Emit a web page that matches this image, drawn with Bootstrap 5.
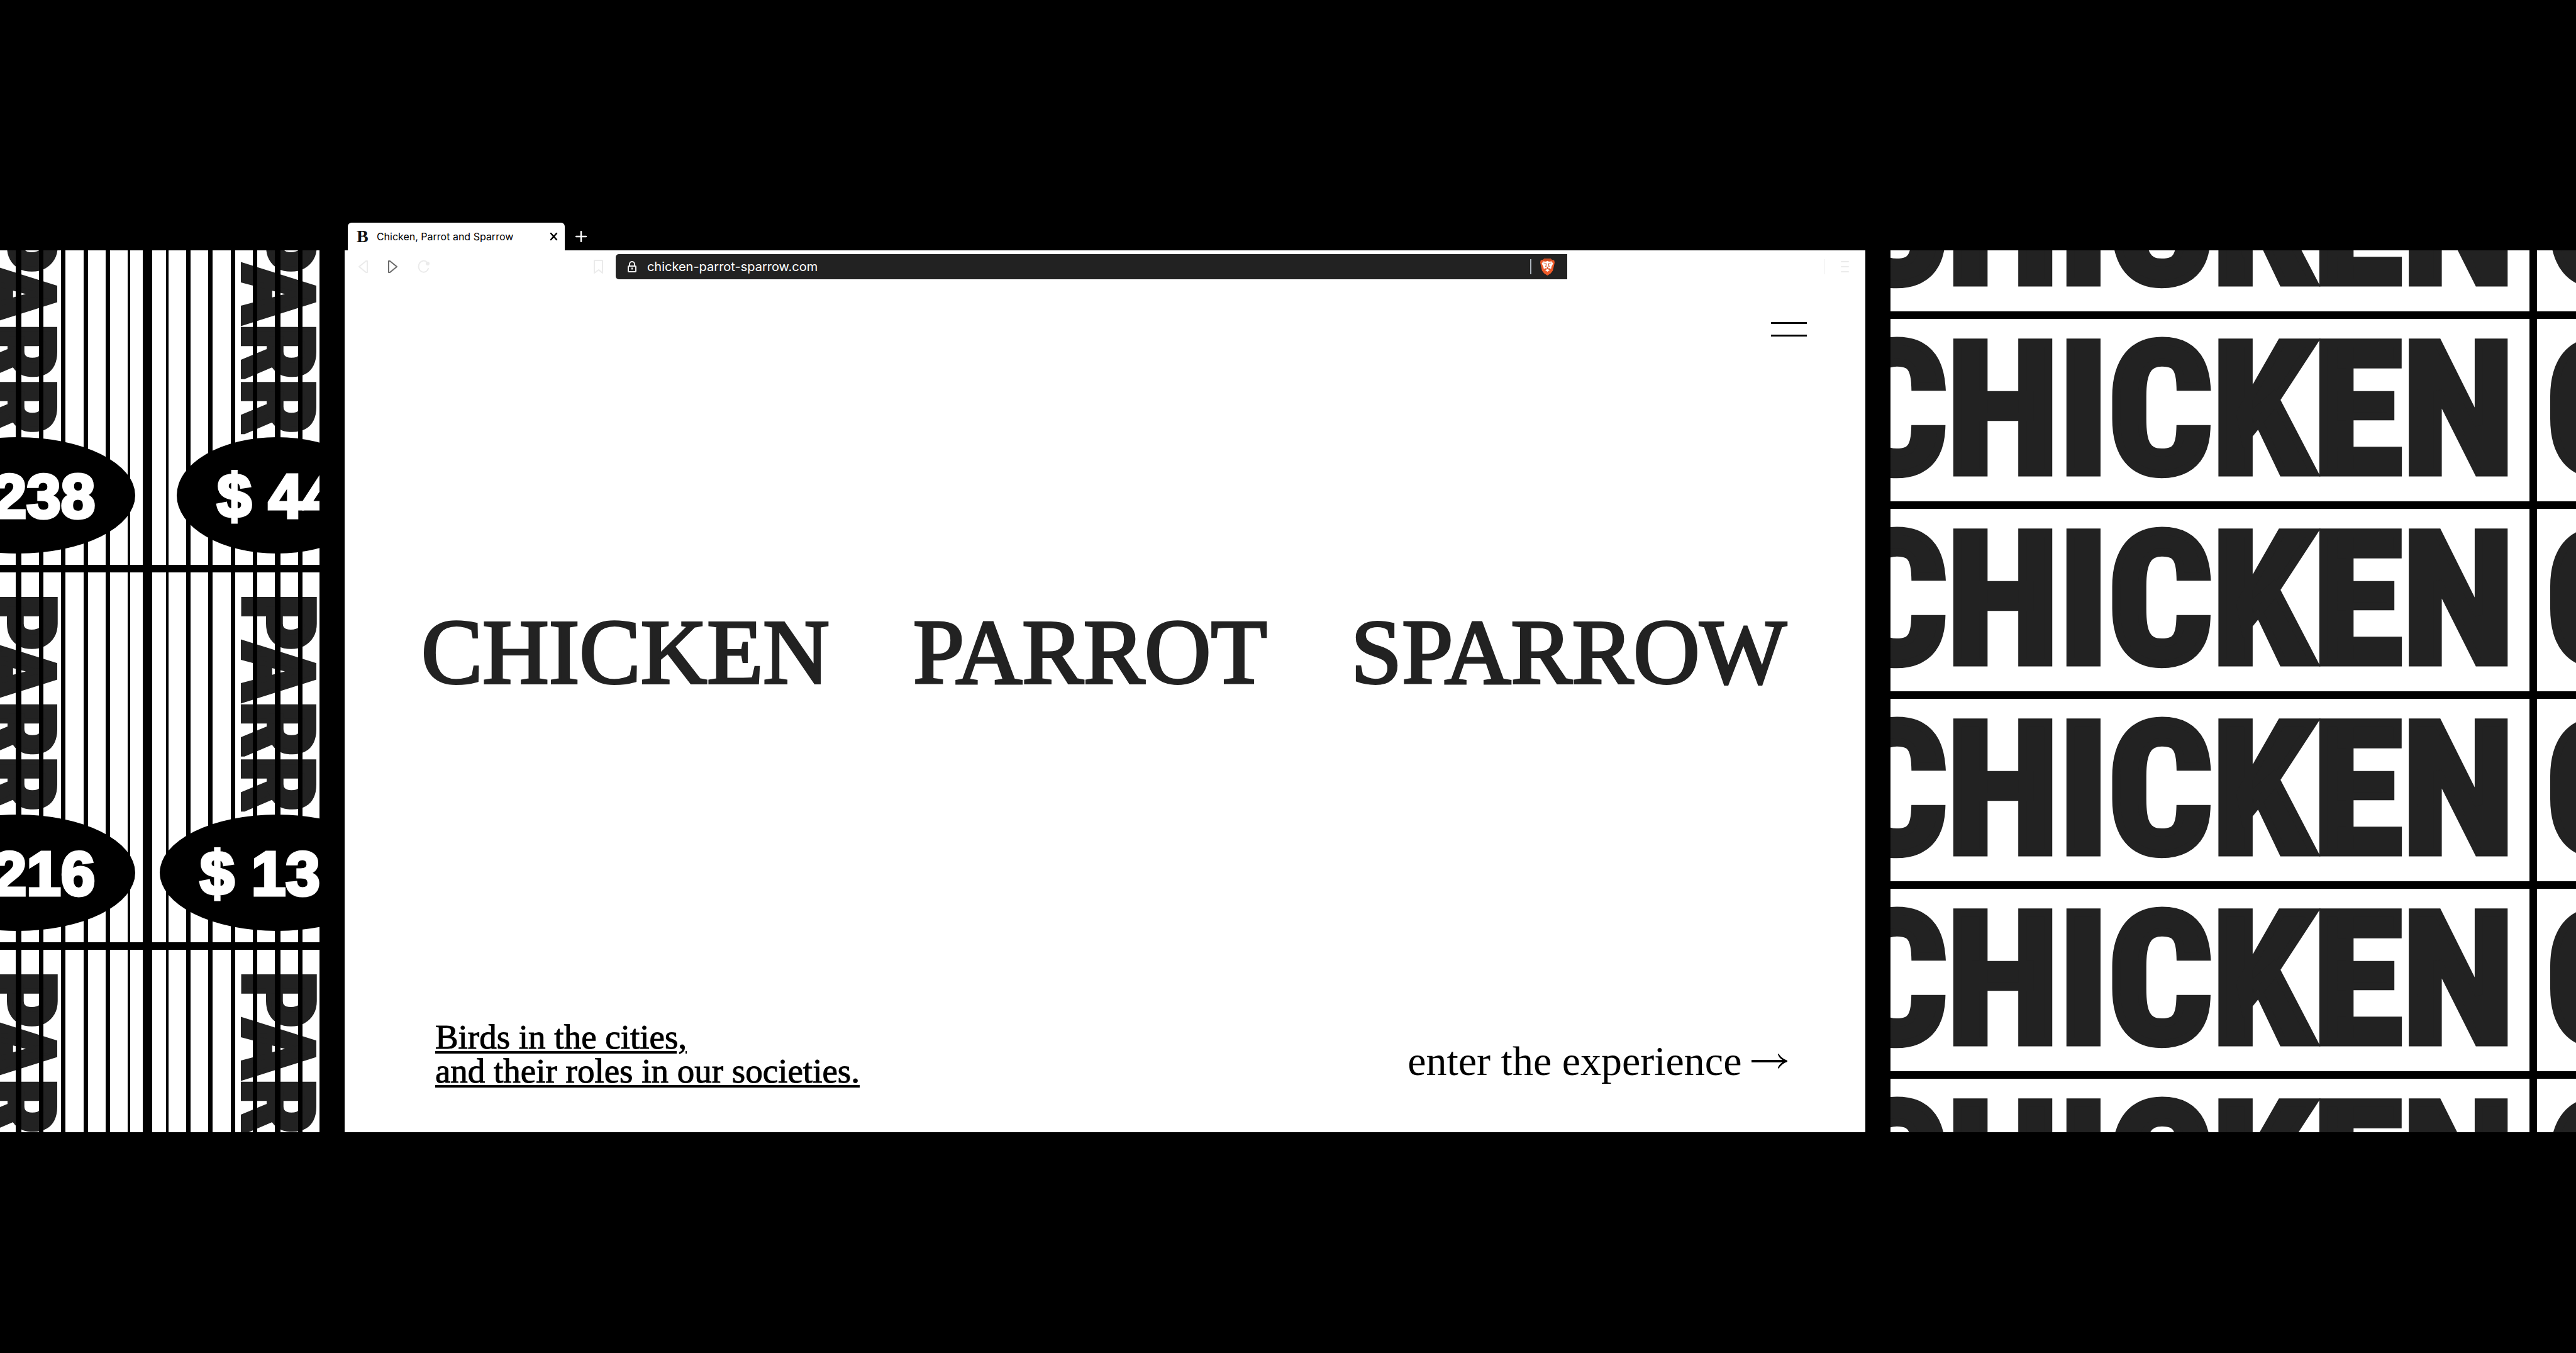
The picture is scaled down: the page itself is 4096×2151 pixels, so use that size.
<!DOCTYPE html>
<html lang="en">
<head>
<meta charset="utf-8">
<meta name="viewport" content="width=device-width, initial-scale=1">
<title>Chicken, Parrot and Sparrow</title>
<link href="https://cdn.jsdelivr.net/npm/bootstrap@5.3.0/dist/css/bootstrap.min.css" rel="stylesheet">
<style>
  :root { --ink: #222; --poster: "Roboto Condensed", "Liberation Sans Narrow", "Liberation Sans", sans-serif; }
  body { background: #000; color: #000; min-height: 100vh; overflow: hidden; }
  .stage { padding-top: 16.46vh; gap: 40px; }
  .side-panel { margin-top: 44px; height: 65.2vh; }
  .parrots { flex: 0 0 12.4vw; }
  .chickens { flex: 0 0 26.6vw; }

  /* caged parrots */
  .cages { margin: -88px 0 0 -170px; gap: 12px; }
  .cage-line { gap: 15px; }
  .cage { flex: 0 0 397px; height: 588px; background: #fff; padding-top: 34px; }
  .parrot-word { writing-mode: vertical-rl; font: 700 158px/184px var(--poster); color: var(--ink); -webkit-text-stroke: 8px var(--ink); white-space: nowrap; }
  .bars { padding: 0 20px 0 22px; }
  .bars i { background: #000; width: 7px; }
  .bars i:first-child, .bars i:last-child { width: 4px; }
  .bars i:nth-child(6) { width: 9px; }
  .price-row { padding-bottom: 18px; }
  .price { background: #000; color: #fff; border-radius: 50%; padding: 0 64px; height: 185px; font: 700 98px/189px "Liberation Sans", Arial, sans-serif; -webkit-text-stroke: 5px #fff; white-space: nowrap; }
  .price-wide { width: 373px; }

  /* stacked chickens */
  .shelves { margin: -193px 0 0 -90px; gap: 12px; }
  .shelf { gap: 12px; }
  .crate { flex: 0 0 1106px; height: 290px; background: #fff; padding-left: 14px; font: 700 290px/290px var(--poster); color: var(--ink); -webkit-text-stroke: 13px var(--ink); white-space: nowrap; overflow: hidden; }

  /* browser window */
  .browser { min-width: 0; height: calc(65.2vh + 44px); font-family: Inter, Roboto, sans-serif; }
  .tab-strip { height: 44px; padding-left: 5px; }
  .page-tab { width: 345px; height: 44px; background: #fff; border-radius: 6px 6px 0 0; padding: 0 11px 0 14px; font-size: 16px; }
  .favicon { font: 700 28px/44px "Liberation Serif", serif; width: 32px; color: #111; }
  .bare { background: none; border: 0; padding: 0; display: flex; align-items: center; justify-content: center; }
  .new-tab { margin-left: 17px; }
  .toolbar { padding: 6px 26px 0 22px; }
  .nav-tools { flex: 0 0 409px; padding-right: 20px; }
  .tool { margin-right: 32px; }
  .address { flex: 0 0 1513px; height: 40px; background: var(--ink); border-radius: 5px 0 0 5px; padding: 0 20px 0 19px; }
  .address input { background: none; border: 0; outline: 0; color: #fff; font-family: Inter, Roboto, sans-serif; font-size: 20px; padding: 0; margin-left: 17px; height: 40px; }
  .rule { width: 2px; height: 24px; background: #adb5bd; margin-right: 14px; }
  .rule-faint { background: #f6f6f6; margin-right: 25px; }
  .page { background: #fff; font-family: "Liberation Serif", serif; }
  .menu-btn { margin: 68px 93px 0 auto; }
  .headline { padding: 0 126px 84px 122px; color: var(--ink); font-size: 146px; line-height: 160px; -webkit-text-stroke: 4px var(--ink); margin: 0; }
  .headline a { color: inherit; text-decoration: none; }
  .page-foot { padding: 0 124px 70px 144px; }
  .about { font-size: 55px; line-height: 54px; color: #000; -webkit-text-stroke: 1px #000; text-decoration-thickness: 4px; text-underline-offset: 4px; }
  .enter { font-size: 66px; line-height: 72px; color: #000; gap: 16px; padding-bottom: 7px; }
</style>
</head>
<body>
<main class="stage d-flex align-items-start">

  <section class="side-panel parrots overflow-hidden" aria-label="Parrots">
    <div class="cages d-flex flex-column">
      <div class="cage-line d-flex">
        <div class="cage position-relative d-flex justify-content-center"><span class="parrot-word">PARR</span><div class="bars position-absolute top-0 start-0 w-100 h-100 d-flex justify-content-between"><i></i><i></i><i></i><i></i><i></i><i></i><i></i><i></i><i></i><i></i><i></i></div><div class="price-row position-absolute top-0 start-0 w-100 h-100 d-flex align-items-end justify-content-center"><span class="price price-wide">$ 238</span></div></div>
        <div class="cage position-relative d-flex justify-content-center"><span class="parrot-word">PARR</span><div class="bars position-absolute top-0 start-0 w-100 h-100 d-flex justify-content-between"><i></i><i></i><i></i><i></i><i></i><i></i><i></i><i></i><i></i><i></i><i></i></div><div class="price-row position-absolute top-0 start-0 w-100 h-100 d-flex align-items-end justify-content-center"><span class="price">$ 44</span></div></div>
      </div>
      <div class="cage-line d-flex">
        <div class="cage position-relative d-flex justify-content-center"><span class="parrot-word">PARR</span><div class="bars position-absolute top-0 start-0 w-100 h-100 d-flex justify-content-between"><i></i><i></i><i></i><i></i><i></i><i></i><i></i><i></i><i></i><i></i><i></i></div><div class="price-row position-absolute top-0 start-0 w-100 h-100 d-flex align-items-end justify-content-center"><span class="price price-wide">$ 216</span></div></div>
        <div class="cage position-relative d-flex justify-content-center"><span class="parrot-word">PARR</span><div class="bars position-absolute top-0 start-0 w-100 h-100 d-flex justify-content-between"><i></i><i></i><i></i><i></i><i></i><i></i><i></i><i></i><i></i><i></i><i></i></div><div class="price-row position-absolute top-0 start-0 w-100 h-100 d-flex align-items-end justify-content-center"><span class="price price-wide">$ 13</span></div></div>
      </div>
      <div class="cage-line d-flex">
        <div class="cage position-relative d-flex justify-content-center"><span class="parrot-word">PAR</span><div class="bars position-absolute top-0 start-0 w-100 h-100 d-flex justify-content-between"><i></i><i></i><i></i><i></i><i></i><i></i><i></i><i></i><i></i><i></i><i></i></div></div>
        <div class="cage position-relative d-flex justify-content-center"><span class="parrot-word">PAR</span><div class="bars position-absolute top-0 start-0 w-100 h-100 d-flex justify-content-between"><i></i><i></i><i></i><i></i><i></i><i></i><i></i><i></i><i></i><i></i><i></i></div></div>
      </div>
    </div>
  </section>

  <section class="browser flex-grow-1 d-flex flex-column">
    <div class="tab-strip d-flex align-items-center">
      <div class="page-tab d-flex align-items-center">
        <span class="favicon">B</span>
        <span class="me-auto text-nowrap">Chicken, Parrot and Sparrow</span>
        <button class="bare" aria-label="Close tab"><svg width="13" height="14" viewBox="0 0 13 14" stroke="#000" stroke-width="2.500" stroke-linecap="round"><path d="M2 2l9 10M11 2L2 12"/></svg></button>
      </div>
      <button class="bare new-tab" aria-label="New tab"><svg width="18" height="18" viewBox="0 0 18 18" stroke="#fff" stroke-width="2.500" stroke-linecap="round"><path d="M9 1v16M1 9h16"/></svg></button>
    </div>
    <div class="page flex-grow-1 d-flex flex-column">
      <div class="toolbar d-flex align-items-center">
        <div class="nav-tools d-flex align-items-center">
          <button class="bare tool" aria-label="Back"><svg width="15" height="22" viewBox="0 0 15 22" fill="none" stroke="#ebebeb" stroke-width="2" stroke-linejoin="round"><path d="M14 2v18h-2L1 11 12 2z"/></svg></button>
          <button class="bare tool" aria-label="Forward"><svg width="15" height="22" viewBox="0 0 15 22" fill="none" stroke="#6b6b6b" stroke-width="2" stroke-linejoin="round"><path d="M1 2v18h2l11-9L3 2z"/></svg></button>
          <button class="bare" aria-label="Reload"><svg width="20" height="22" viewBox="0 0 20 22" fill="none" stroke="#ebebeb" stroke-width="2" stroke-linecap="round"><path d="M15 4A8 9 0 1 0 17 14"/><circle cx="16" cy="6" r="2" fill="#ebebeb"/></svg></button>
          <button class="bare ms-auto" aria-label="Bookmark"><svg width="15" height="22" viewBox="0 0 15 22" fill="none" stroke="#ebebeb" stroke-width="2" stroke-linejoin="round"><path d="M1 1h13v20l-6-5-7 5z"/></svg></button>
        </div>
        <div class="address d-flex align-items-center">
          <svg width="14" height="18" viewBox="0 0 14 18" fill="none" stroke="#eee" stroke-width="2"><path d="M3 8V5a4 4 0 0 1 8 0v3"/><rect x="1" y="8" width="12" height="9" rx="1"/><path d="M6 12h2" stroke-width="3"/></svg>
          <input class="flex-grow-1" type="text" aria-label="Address" value="chicken-parrot-sparrow.com">
          <span class="rule"></span>
          <svg width="23" height="27" viewBox="0 0 56 95" preserveAspectRatio="none"><path d="M16 0h24l6 8 8 2 2 12-2 14-5 32-8 15-13 12-13-12-8-15-5-32L0 22l2-12 8-2z" fill="#ee5a29"/><path d="M16 0h24l6 8-6 5H16l-6-5z" fill="#cf4c20"/><path d="M12 16l10 2 6-5 6 5 10-2 6 12-6 16-2 14-8-4-6 3-6-3-8 4-2-14L6 28z" fill="#fff"/><path d="M28 55l9 9-9 10-9-10z" fill="#fff"/><path d="M13 24l10 4v10l-2 6 7 5 7-5-2-6V28l10-4M28 49v8l-9 6M28 57l9 6" fill="none" stroke="#d9572b" stroke-width="3"/></svg>
        </div>
        <span class="rule rule-faint ms-auto"></span>
        <button class="bare" aria-label="Browser menu"><svg width="13" height="18" viewBox="0 0 13 18" stroke="#ebebeb" stroke-width="2" stroke-linecap="round"><path d="M1 1h11M1 9h11M1 17h11"/></svg></button>
      </div>
      <button class="bare menu-btn" aria-label="Menu"><svg width="57" height="23" viewBox="0 0 57 23" fill="#000"><path d="M0 0h57v3H0zM0 20h57v3H0z"/></svg></button>
      <h1 class="headline d-flex justify-content-between my-auto"><a href="#chicken">CHICKEN</a><a href="#parrot">PARROT</a><a href="#sparrow">SPARROW</a></h1>
      <footer class="page-foot d-flex justify-content-between align-items-end">
        <a class="about" href="#about">Birds in the cities,<br>and their roles in our societies.</a>
        <a class="enter d-flex align-items-center text-decoration-none text-nowrap" href="#enter">enter the experience
          <svg width="57" height="24" viewBox="0 0 57 24" aria-hidden="true"><path d="M0 10h49q-6-4-7-9l1-1q5 8 14 11v2q-9 3-14 11l-1-1q1-5 7-9H0z"/></svg></a>
      </footer>
    </div>
  </section>

  <section class="side-panel chickens overflow-hidden" aria-label="Chickens">
    <div class="shelves d-flex flex-column">
      <div class="shelf d-flex"><div class="crate">CHICKEN</div><div class="crate">C</div></div>
      <div class="shelf d-flex"><div class="crate">CHICKEN</div><div class="crate">C</div></div>
      <div class="shelf d-flex"><div class="crate">CHICKEN</div><div class="crate">C</div></div>
      <div class="shelf d-flex"><div class="crate">CHICKEN</div><div class="crate">C</div></div>
      <div class="shelf d-flex"><div class="crate">CHICKEN</div><div class="crate">C</div></div>
      <div class="shelf d-flex"><div class="crate">CHICKEN</div><div class="crate">C</div></div>
    </div>
  </section>
</main>
<script src="https://cdn.jsdelivr.net/npm/bootstrap@5.3.0/dist/js/bootstrap.bundle.min.js"></script>
</body>
</html>
